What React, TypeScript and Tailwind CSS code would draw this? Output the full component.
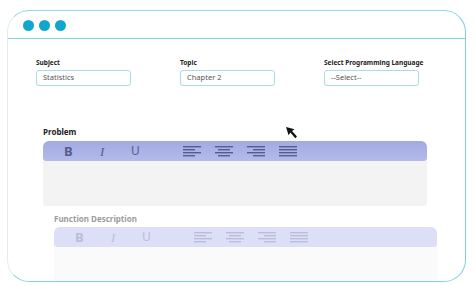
import React from 'react';

const font = { fontFamily: '"Noto Sans", "Open Sans", sans-serif' };

function AlignIcon({ kind, color }: { kind: 'left' | 'center' | 'right' | 'justify'; color: string }) {
  const rows = [0, 1, 2, 3].map((i) => {
    const short = kind !== 'justify' && i % 2 === 1;
    const w = short ? 12 : 18;
    const x = kind === 'left' ? 0 : kind === 'center' ? (18 - w) / 2 : kind === 'right' ? 18 - w : 0;
    return <rect key={i} x={x} y={i * 3} width={w} height={1.4} fill={color} />;
  });
  return (
    <svg width="18" height="11" viewBox="0 0 18 11">
      {rows}
    </svg>
  );
}

function Toolbar({ faded }: { faded?: boolean }) {
  const c = faded ? '#b9bddc' : '#565d8c';
  return (
    <div
      className={
        faded
          ? 'h-[20px] rounded-t-[6px] rounded-b-[3px] bg-[#dddff6] flex items-center'
          : 'h-[20px] rounded-t-[6px] rounded-b-[3px] bg-gradient-to-b from-[#a2aae3] to-[#b4baea] flex items-center'
      }
    >
      <span className="ml-[21px] w-[10px] text-[13px] font-bold leading-none" style={{ color: c, ...font }}>
        B
      </span>
      <span
        className="ml-[26px] w-[6px] text-[13px] italic leading-none"
        style={{ color: c, fontFamily: '"Liberation Serif", serif' }}
      >
        I
      </span>
      <span className="ml-[25px] w-[10px] text-[12px] leading-none" style={{ color: c, ...font }}>
        U
      </span>
      <div className="ml-[42px] flex gap-[14px]">
        <AlignIcon kind="left" color={c} />
        <AlignIcon kind="center" color={c} />
        <AlignIcon kind="right" color={c} />
        <AlignIcon kind="justify" color={c} />
      </div>
    </div>
  );
}

function Field({ label, value }: { label: string; value: string }) {
  return (
    <div className="w-[95px] flex flex-col">
      <div className="text-[6.5px] font-bold text-[#222] leading-[9px] whitespace-nowrap" style={font}>
        {label}
      </div>
      <div className="mt-[3px] h-[16px] rounded-[3px] border border-[#a9dde6] bg-white flex items-center px-[6px]">
        <span className="text-[7.5px] text-[#555]" style={font}>
          {value}
        </span>
      </div>
    </div>
  );
}

export default function App() {
  return (
    <div className="w-[474px] h-[286px] bg-white pt-[10px] pl-[7px] relative">
      <div className="w-[459px] h-[272px] rounded-[22px] border border-t-[#93d8e3] border-r-[#7fd0dc] border-b-[#86d3df] border-l-[#e2edf3] overflow-hidden flex flex-col">
        <div className="h-[28px] shrink-0 border-b-[1.5px] border-[#8ad4e0] flex items-center gap-[5px] pl-[15px] pt-[1px]">
          <div className="w-[11px] h-[11px] rounded-full bg-[#10a7cf]" />
          <div className="w-[11px] h-[11px] rounded-full bg-[#10a7cf]" />
          <div className="w-[11px] h-[11px] rounded-full bg-[#10a7cf]" />
        </div>

        <div className="flex pl-[28px] pt-[19px] gap-[49px]">
          <Field label="Subject" value="Statistics" />
          <Field label="Topic" value="Chapter 2" />
          <Field label="Select Programming Language" value="--Select--" />
        </div>

        <div className="ml-[35px] w-[384px] mt-[40px] flex flex-col">
          <div className="text-[8px] font-bold text-[#222] leading-[11px] mb-[4px]" style={font}>
            Problem
          </div>
          <Toolbar />
          <div className="h-[45px] bg-[#f3f3f3] rounded-b-[3px]" />
        </div>

        <div className="ml-[46px] w-[383px] mt-[7px] flex flex-col">
          <div className="text-[8px] font-bold text-[#9c9c9c] leading-[11px] mb-[3px]" style={font}>
            Function Description
          </div>
          <Toolbar faded />
          <div className="h-[40px] bg-[#fafafa]" />
        </div>
      </div>

      <svg className="absolute left-[285px] top-[126px]" width="13" height="14" viewBox="0 0 13 14">
        <path d="M1 1 L9.5 3.2 L7 5 L12 10.5 L10.3 12.2 L5.4 6.6 L3.6 9.2 Z" fill="#111" />
      </svg>
    </div>
  );
}
